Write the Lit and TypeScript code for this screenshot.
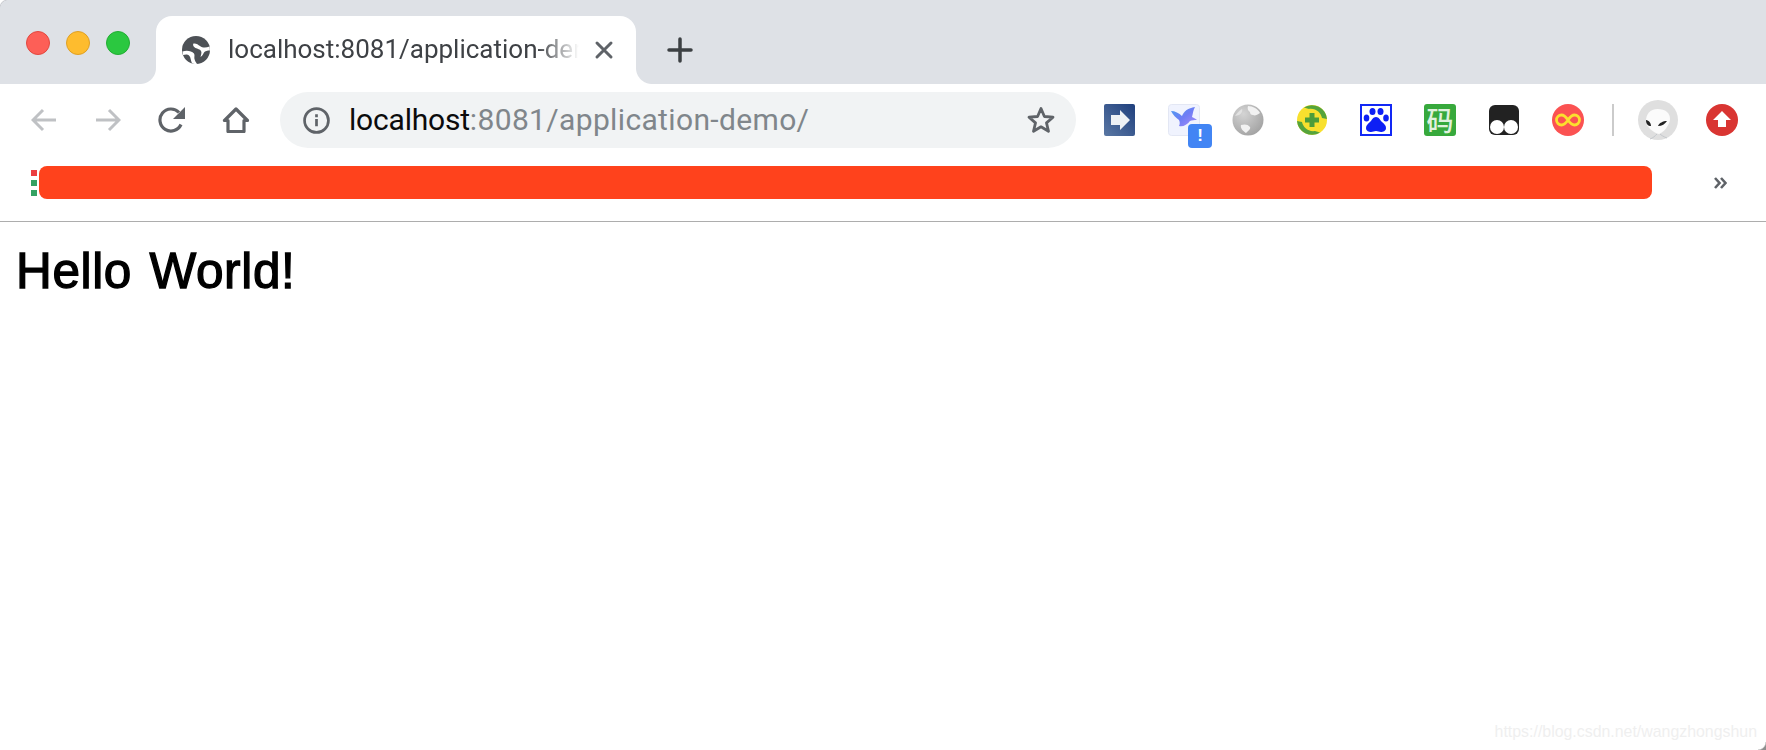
import { LitElement, html, css, svg } from "lit";
import { customElement } from "lit/decorators.js";

const EXT = [
  svg`<svg width="32" height="32" viewBox="0 0 32 32"><defs><linearGradient id="g1" x1="0" y1="1" x2="1" y2="0"><stop offset="0" stop-color="#5a77a3"/><stop offset="1" stop-color="#1f3f7d"/></linearGradient></defs><rect x="0" y="0" width="31" height="32" rx="2" fill="url(#g1)"/><path d="M7 11h9V6l10 10-10 10v-5H7z" fill="#eef1f5"/></svg>`,
  svg`<svg width="32" height="32" viewBox="0 0 32 32"><defs><linearGradient id="g3" x1="0" y1="0" x2="1" y2="1"><stop offset="0" stop-color="#4aa0f0"/><stop offset=".5" stop-color="#6f7df5"/><stop offset="1" stop-color="#a98cf8"/></linearGradient></defs><rect x=".5" y=".5" width="31" height="31" rx="3" fill="#f0f3fe" stroke="#e3e7f4"/><path d="M3 7c4 0 8 2 11 5 2-5 6-8 13-9-2 3-2 7-3 10 2 1 4 2 5 3-3 0-5 0-7 1-3 4-7 6-11 5 1-2 1-4 0-6C8 14 5 11 3 7z" fill="url(#g3)"/></svg>`,
  svg`<svg width="32" height="32" viewBox="0 0 32 32"><defs><radialGradient id="g2" cx=".35" cy=".3" r=".8"><stop offset="0" stop-color="#d4d4d4"/><stop offset="1" stop-color="#a0a0a0"/></radialGradient></defs><circle cx="16" cy="16" r="15.5" fill="url(#g2)"/><path d="M16 2c5 0 10 3 12 7-3 2-5 3-7 2-2 0-3-1-3-3-2-1-3-4-2-6zM9 21c3-1 7-1 9 2 1 2-2 4-4 6-3-2-6-5-5-8z" fill="#f2f2f2"/><path d="M3 12c2-3 4-5 7-7 1 2-1 5-3 6z" fill="#e2e2e2"/></svg>`,
  svg`<svg width="32" height="32" viewBox="0 0 32 32"><circle cx="16" cy="16" r="15" fill="#f8e02e"/><path d="M8 3.500A15 15 0 0 1 31 15l-5-1c-1-5-6-10-13-9zM24 28.500A15 15 0 0 1 1 17l5 1c1 5 6 10 13 9z" fill="#55a43c"/><path d="M13.500 9h5v4.500H23v5h-4.500V23h-5v-4.500H9v-5h4.500z" fill="#4e9d3a"/></svg>`,
  svg`<svg width="32" height="32" viewBox="0 0 32 32"><rect x="1" y="1" width="30" height="30" fill="#fff" stroke="#1228f5" stroke-width="2"/><g fill="#0d1ff5"><ellipse cx="6.500" cy="14" rx="2.800" ry="3.600"/><ellipse cx="12.500" cy="7.500" rx="3" ry="3.500"/><ellipse cx="20.500" cy="7.500" rx="3" ry="3.500"/><ellipse cx="26" cy="14" rx="2.800" ry="3.600"/><path d="M16 13c3 0 4 3 6 5s4 3 4 6-3 4-5 4-3-1-5-1-3 1-5 1-5-1-5-4 2-4 4-6 3-5 6-5z"/></g></svg>`,
];

@customElement("app-root")
export class AppRoot extends LitElement {
  static styles = css`
    :host { display: block; width: 1766px; height: 750px; position: relative; overflow: hidden; background: #fff; font-family: Roboto, "Liberation Sans", sans-serif; }
    .strip { display: flex; height: 84px; background: #dee1e6; }
    .lights { display: flex; gap: 16px; padding: 31px 0 0 26px; width: 130px; box-sizing: border-box; }
    .light { width: 24px; height: 24px; border-radius: 50%; box-sizing: border-box; border: 1px solid; }
    .red { background: #fd5f57; border-color: #e2483f; }
    .yellow { background: #febc2e; border-color: #dfa024; }
    .green { background: #2bc840; border-color: #22ad33; }
    .tab { position: relative; width: 480px; height: 68px; margin: 16px 0 0 26px; background: #fff; border-radius: 16px 16px 0 0; display: flex; align-items: center; padding: 0 18px 0 26px; box-sizing: border-box; }
    .tab::before, .tab::after { content: ""; position: absolute; bottom: 0; width: 16px; height: 16px; background: radial-gradient(circle at var(--cx) 0, #dee1e6 15.5px, #fff 16.5px); }
    .tab::before { left: -16px; --cx: 0; }
    .tab::after { right: -16px; --cx: 100%; }
    .globe { flex: none; width: 28px; height: 28px; }
    .title { margin: 0 0 2px 18px; width: 351px; flex: none; overflow: hidden; white-space: nowrap; font-size: 26px; color: #3e4145; line-height: 32px; -webkit-mask-image: linear-gradient(to right, #000 310px, transparent 351px); mask-image: linear-gradient(to right, #000 310px, transparent 351px); }
    .close { flex: none; width: 20px; height: 20px; margin-left: 15px; }
    .plus { flex: none; width: 26px; height: 26px; margin: 37px 0 0 31px; }
    .toolbar { display: flex; align-items: center; height: 66px; padding: 6px 0 0 12px; box-sizing: border-box; }
    .btn { flex: none; width: 64px; height: 60px; display: flex; align-items: center; justify-content: center; }
    .omni { flex: none; width: 796px; height: 56px; margin: 0 12px; background: #f1f3f4; border-radius: 28px; display: flex; align-items: center; padding: 0 20px 0 23px; box-sizing: border-box; }
    .info { flex: none; width: 27px; height: 27px; }
    .url { flex: 1; margin: 0 0 2px 19px; font-size: 30px; color: #80868b; white-space: nowrap; letter-spacing: .35px; }
    .url b { font-weight: 400; color: #0b0b0c; letter-spacing: -.2px; }
    .star { flex: none; width: 30px; height: 30px; }
    .ext { position: relative; }
    .sep { flex: none; width: 2px; height: 32px; margin-left: 12px; background: #cbcbcb; }
    .avatar { flex: none; width: 40px; height: 40px; margin-left: 24px; }
    .up { flex: none; width: 32px; height: 32px; margin-left: 28px; }
    .badge { position: absolute; left: 36px; top: 34px; width: 24px; height: 24px; border-radius: 4px; background: #4285f4; color: #fff; font: 700 17px/24px "Liberation Sans", sans-serif; text-align: center; }
    .ma { width: 32px; height: 32px; background: #37a93c; border-radius: 3px; color: #e0f1dd; font: 500 27px/32px "Noto Sans CJK SC", sans-serif; text-align: center; }
    .bookmarks { display: flex; align-items: center; height: 65px; padding: 0 0 6px 31px; border-bottom: 1px solid #adadad; }
    .dots { flex: none; display: flex; flex-direction: column; gap: 4px; width: 8px; }
    .dot { width: 6px; height: 6px; }
    .bar { flex: none; width: 1613px; height: 33px; background: #ff421c; border-radius: 8px; }
    .more { flex: none; width: 14px; height: 12px; margin-left: 61px; }
    h1 { margin: 0; padding: 19px 0 0 16px; font: 400 49.5px/60px "Liberation Sans", Arial, sans-serif; color: #000; -webkit-text-stroke: 1.3px #000; letter-spacing: .65px; word-spacing: 3px; }
    .mark { position: absolute; right: 9px; bottom: 8px; font: 400 15.9px/20px "Liberation Sans", sans-serif; color: #efefef; }
    .corner-tl { position: absolute; left: 0; top: 0; width: 8px; height: 8px; background: radial-gradient(circle at 100% 100%, transparent 7.5px, #c9cbd0 8px, #fff 9px); }
    .corner-br { position: absolute; right: 0; bottom: 0; width: 8px; height: 8px; background: radial-gradient(circle at 0 0, transparent 7px, #8e8e8e 8.5px); }
  `;

  render() {
    return html`
      <div class="strip">
        <div class="lights"><div class="light red"></div><div class="light yellow"></div><div class="light green"></div></div>
        <div class="tab">
          <svg class="globe" viewBox="0 0 28 28"><circle cx="14" cy="14" r="14" fill="#4d5156"/><path d="M.5 15.500C5 14 9.500 15 12 17.500 13 19 12 21 12.500 23 13 25 14 26.500 15 28 12.500 28.200 11.500 27.800 10 27.300 8.500 24 9 21.500 7 19.500 5.500 18 3 18.500 1 19zM27.600 10.500C24 12 20.500 12 18 10 16 8.500 14 7 11.500 7.500 10.500 9 11.500 11 13.500 12 15.500 13 18 13 19 15 20 17 19 19 18.500 21 20.500 20 21 18 22 16.500 23 15 25.500 14.500 27.900 14.500z" fill="#fff"/></svg>
          <div class="title">localhost:8081/application-demo/</div>
          <svg class="close" viewBox="0 0 20 20"><path d="M3 3l14 14M17 3L3 17" stroke="#5f6368" stroke-width="3" stroke-linecap="round"/></svg>
        </div>
        <svg class="plus" viewBox="0 0 26 26"><path d="M13 2v22M2 13h22" stroke="#3c4043" stroke-width="3.500" stroke-linecap="round"/></svg>
      </div>
      <div class="toolbar">
        <div class="btn"><svg width="26" height="24" viewBox="0 0 26 24"><path d="M25 12H3M12 2L2 12l10 10" fill="none" stroke="#bfc1c4" stroke-width="3"/></svg></div>
        <div class="btn"><svg width="26" height="24" viewBox="0 0 26 24"><path d="M1 12h22M14 2l10 10-10 10" fill="none" stroke="#bfc1c4" stroke-width="3"/></svg></div>
        <div class="btn"><svg width="28" height="26" viewBox="0 0 28 26"><path d="M23 17.500A11 11 0 1 1 21 5.500" fill="none" stroke="#5f6368" stroke-width="3.200"/><path d="M27 0v12H15z" fill="#5f6368"/></svg></div>
        <div class="btn"><svg width="28" height="26" viewBox="0 0 28 26"><path d="M14 2L2.500 13.500H6V24.500h16V13.500h3.500z" fill="none" stroke="#5f6368" stroke-width="3.200" stroke-linejoin="round"/></svg></div>
        <div class="omni">
          <svg class="info" viewBox="0 0 26 26"><circle cx="13" cy="13" r="11.500" fill="none" stroke="#5f6368" stroke-width="2.600"/><path d="M13 11.500v7M13 7v2.800" stroke="#5f6368" stroke-width="2.600"/></svg>
          <div class="url"><b>localhost</b>:8081/application-demo/</div>
          <svg class="star" viewBox="0 0 30 30"><path d="M15 3.500l3.400 8 8.600.7-6.500 5.700 2 8.400L15 21.800 7.500 26.300l2-8.400L3 12.200l8.600-.7z" fill="none" stroke="#5f6368" stroke-width="2.800" stroke-linejoin="round"/></svg>
        </div>
        ${EXT.map((icon, i) => html`<div class="btn ext">${icon}${i === 1 ? html`<div class="badge">!</div>` : ""}</div>`)}
        <div class="btn"><div class="ma">码</div></div>
        <div class="btn"><svg width="32" height="32" viewBox="0 0 32 32"><rect x="1" y="1" width="30" height="30" rx="6" fill="#222"/><circle cx="9" cy="23" r="7" fill="#fff"/><circle cx="23" cy="23" r="7" fill="#fff"/></svg></div>
        <div class="btn"><svg width="32" height="32" viewBox="0 0 32 32"><circle cx="16" cy="16" r="16" fill="#fb5252"/><path d="M16 16c-2-3-4-5-6.500-5a5 5 0 0 0 0 10c2.500 0 4.500-2 6.500-5s4-5 6.500-5a5 5 0 0 1 0 10c-2.500 0-4.500-2-6.500-5z" fill="none" stroke="#fbe02e" stroke-width="2.800"/></svg></div>
        <div class="sep"></div>
        <svg class="avatar" viewBox="0 0 40 40"><circle cx="20" cy="20" r="20" fill="#dfdfdf"/><path d="M19.500 9c8 0 12.500 4 12.500 10 0 6-7 14-11 15-5-1-13-7-13-13 0-7 4-12 11.500-12z" fill="#fbfbfb"/><path d="M12 39c3-1 5-3 7-5M29 38c-3-1-6-3-7-4" stroke="#c4c8cc" fill="none"/><path d="M8 20c3 .5 5 3 5 6-3 0-5-2-5-6zM29 21c-2 3-5 5-9 5 1-3 5-5 9-5z" fill="#222"/></svg>
        <svg class="up" viewBox="0 0 32 32"><circle cx="16" cy="16" r="16" fill="#d93532"/><path d="M16 7l9 9h-5v7h-8v-7H7z" fill="#fff"/></svg>
      </div>
      <div class="bookmarks">
        <div class="dots"><div class="dot" style="background:#ec3f42"></div><div class="dot" style="background:#34a263"></div><div class="dot" style="background:#34a263"></div></div>
        <div class="bar"></div>
        <svg class="more" viewBox="0 0 14 12"><path d="M2 1l4.500 5L2 11M8 1l4.500 5L8 11" fill="none" stroke="#5f6368" stroke-width="2.600"/></svg>
      </div>
      <h1>Hello World!</h1>
      <div class="mark">https://blog.csdn.net/wangzhongshun</div>
      <div class="corner-tl"></div>
      <div class="corner-br"></div>
    `;
  }
}
